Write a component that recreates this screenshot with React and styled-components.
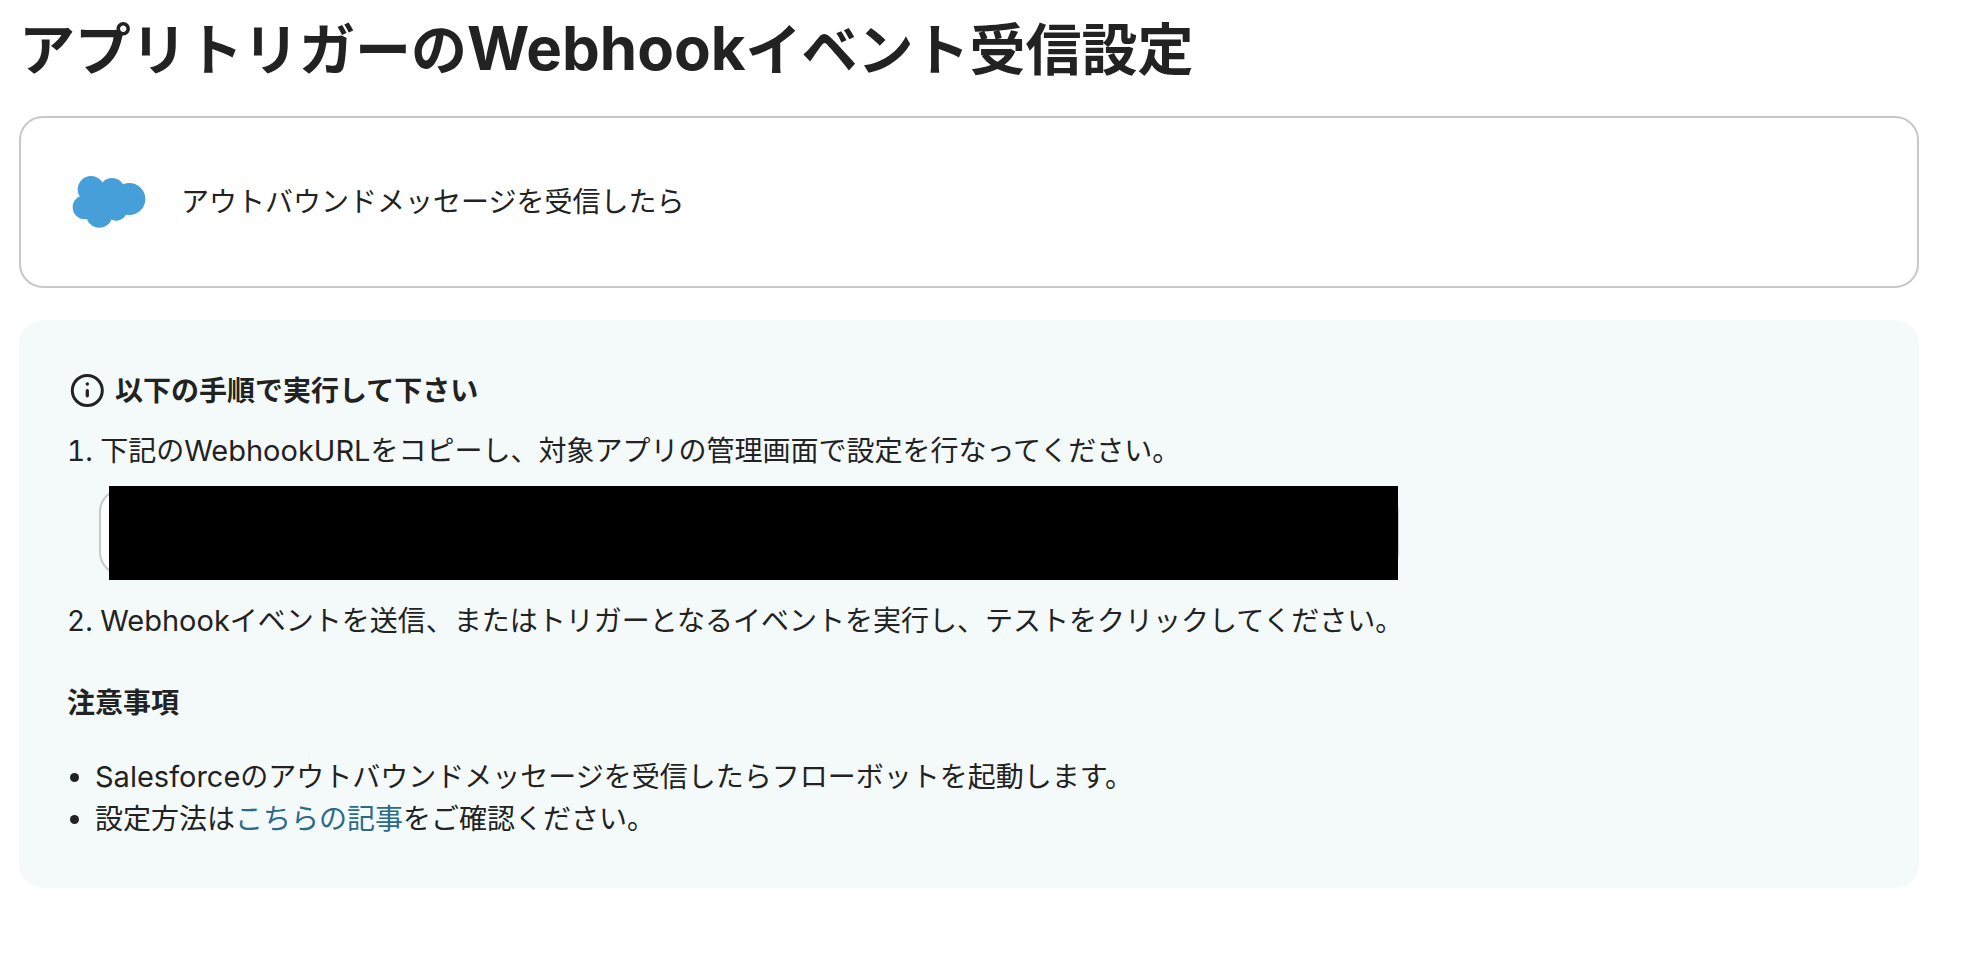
import React from 'react';
import styled, { createGlobalStyle } from 'styled-components';

const GlobalStyle = createGlobalStyle`
  * {
    box-sizing: border-box;
  }
  body {
    margin: 0;
    background: #fff;
    color: #222;
    font-family: Inter, "Noto Sans CJK JP", sans-serif;
    font-size: 28px;
    line-height: 42px;
  }
`;

const Page = styled.main`
  padding: 8px 59px 72px 19px;
`;

const Title = styled.h1`
  margin: 0 0 24px;
  font-size: 56px;
  font-weight: 700;
  line-height: 84px;
`;

/* latin words run a little larger than the kana around them */
const Latin = styled.span`
  font-size: ${(props) => (props.$large ? '60px' : '29px')};
  line-height: 1;
`;

const TriggerCard = styled.section`
  display: flex;
  align-items: center;
  gap: 34px;
  min-height: 172px;
  padding: 0 50px;
  border: 2px solid #c8c8c8;
  border-radius: 24px;
`;

const Cloud = styled.svg`
  flex: none;
  width: 76px;
  height: 54px;
  fill: #479fda;
`;

const Panel = styled.section`
  margin-top: 32px;
  padding: 50px 48px 48px;
  border-radius: 24px;
  background: #f4fafa;
`;

const PanelHeading = styled.h2`
  display: flex;
  align-items: center;
  gap: 8px;
  margin: 0 0 18px;
  font-size: 28px;
  font-weight: 700;
`;

const Icon = styled.svg`
  flex: none;
  width: 40px;
  height: 40px;
`;

const Step = styled.label`
  display: block;
  font-variant-numeric: tabular-nums;
`;

const UrlField = styled.div`
  position: relative;
  width: 1300px;
  max-width: 100%;
  margin: 16px 0 24px 32px;
`;

const UrlInput = styled.input`
  display: block;
  width: 100%;
  height: 88px;
  padding: 0 24px;
  border: 2px solid #c8c8c8;
  border-radius: 24px;
  background: #fff;
  font: inherit;
`;

const Mask = styled.div`
  position: absolute;
  top: -2px;
  right: 1px;
  bottom: -4px;
  left: 10px;
  background: #000;
`;

const NoteHeading = styled.h3`
  margin: 40px 0 32px;
  font-size: 28px;
  font-weight: 700;
`;

const Notes = styled.ul`
  margin: 0;
  padding-left: 28px;
`;

const Link = styled.a`
  color: #2d6a86;
  text-decoration: none;
`;

function SalesforceLogo() {
  return (
    <Cloud viewBox="34 45 228 162" aria-hidden="true">
      <circle cx="94" cy="88" r="40" />
      <circle cx="157" cy="92" r="38" />
      <circle cx="209" cy="117" r="48" />
      <circle cx="170" cy="150" r="32" />
      <circle cx="119" cy="163" r="40" />
      <circle cx="75" cy="142" r="36" />
      <path d="M75 100L130 75L200 100L185 150L120 165L75 150Z" />
    </Cloud>
  );
}

function InfoIcon() {
  return (
    <Icon viewBox="0 0 40 40" fill="none" stroke="#222" aria-hidden="true">
      <circle cx="20.300" cy="19.500" r="15" strokeWidth="3" />
      <circle cx="20.300" cy="13" r="1.700" fill="#222" stroke="none" />
      <path d="M20.300 19.700V24.800" strokeWidth="3.300" strokeLinecap="round" />
    </Icon>
  );
}

export default function App() {
  return (
    <>
      <GlobalStyle />
      <Page>
        <Title>
          アプリトリガーの<Latin $large>Webhook</Latin>イベント受信設定
        </Title>
        <TriggerCard>
          <SalesforceLogo />
          <span>アウトバウンドメッセージを受信したら</span>
        </TriggerCard>
        <Panel>
          <PanelHeading>
            <InfoIcon />
            以下の手順で実行して下さい
          </PanelHeading>
          <Step htmlFor="webhook-url">
            1. 下記の<Latin>WebhookURL</Latin>をコピーし、対象アプリの管理画面で設定を行なってください。
          </Step>
          <UrlField>
            <UrlInput id="webhook-url" type="text" readOnly />
            <Mask />
          </UrlField>
          <Step as="div">
            2. <Latin>Webhook</Latin>イベントを送信、またはトリガーとなるイベントを実行し、テストをクリックしてください。
          </Step>
          <NoteHeading>注意事項</NoteHeading>
          <Notes>
            <li>
              <Latin>Salesforce</Latin>のアウトバウンドメッセージを受信したらフローボットを起動します。
            </li>
            <li>
              設定方法は<Link href="#article">こちらの記事</Link>をご確認ください。
            </li>
          </Notes>
        </Panel>
      </Page>
    </>
  );
}
